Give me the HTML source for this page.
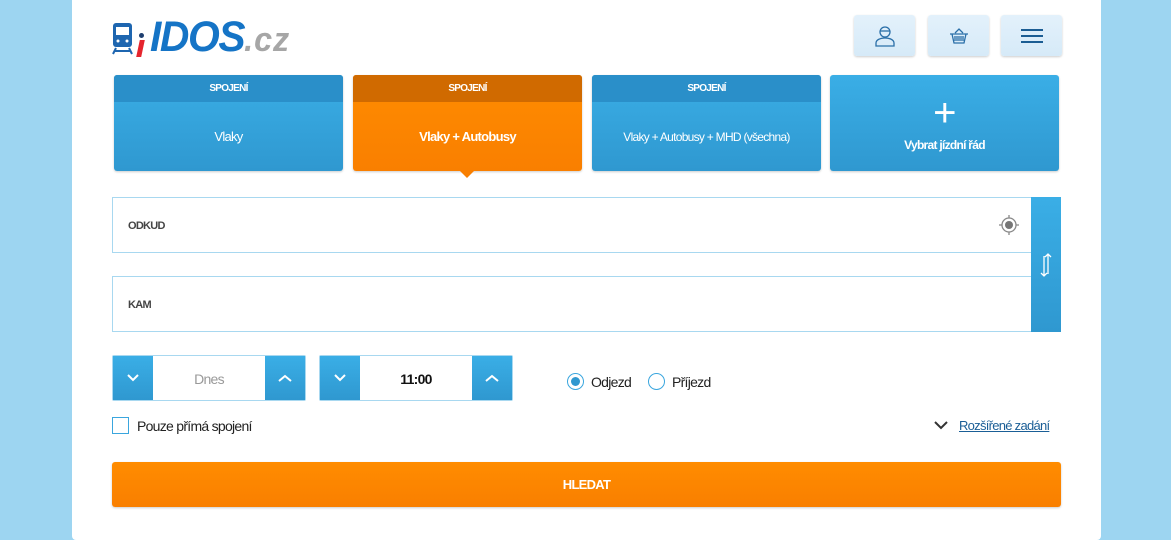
<!DOCTYPE html>
<html><head><meta charset="utf-8"><style>
*{box-sizing:border-box;margin:0;padding:0}
body{width:1171px;height:526px;overflow:hidden;background:#9dd5f1;font-family:"Liberation Sans",sans-serif;position:relative;letter-spacing:-0.045em}
.panel{position:absolute;left:72px;top:0;width:1029px;height:540px;background:#fff;border-radius:0 0 4px 4px}
.abs{position:absolute}
.hb{position:absolute;top:15px;width:61px;height:41px;background:linear-gradient(#e3f1fb,#d6eaf8);border-radius:3px;box-shadow:0 1px 2px rgba(0,0,0,.2);display:flex;align-items:center;justify-content:center}
.tab{position:absolute;top:75px;width:229px;height:96px;background:linear-gradient(#3aaee6,#2f98d0);border-radius:3px;color:#fff;text-align:center;box-shadow:0 1px 2px rgba(0,0,0,.2)}
.tab .h{height:27px;line-height:27px;font-size:10px;font-weight:bold;background:#2a8fc9;border-radius:3px 3px 0 0}
.tab .t{font-size:13px;line-height:70px}
.inp{position:absolute;left:112px;width:920px;height:56px;border:1px solid #a8d8f0;font-size:11px;font-weight:bold;color:#444;padding-left:15px;line-height:56px}
.spin{position:absolute;top:355px;width:194px;height:46px;border:1px solid #a8d8f0;border-radius:2px;background:#fff}
.spin .b{position:absolute;top:0;width:40px;height:44px;background:linear-gradient(#3aaee6,#2f98d0);display:flex;align-items:center;justify-content:center}
.spin .v{position:absolute;left:40px;right:40px;top:0;line-height:46px;text-align:center;font-size:14px}
.radio{position:absolute;top:373px;width:17px;height:17px;border:1.5px solid #3aa6de;border-radius:50%}
</style></head><body>
<div class="panel"></div>
<svg class="abs" style="left:112px;top:22px" width="26" height="34" viewBox="0 0 26 34"><rect x="1" y="1" width="19" height="24" rx="3" fill="#1e66b0"/><rect x="4" y="5" width="13" height="8" fill="#fff"/><circle cx="6" cy="19" r="1.5" fill="#fff"/><circle cx="15" cy="19" r="1.5" fill="#fff"/><path d="M4 26l-3 6M17 26l3 6M3 29h15" stroke="#1e66b0" stroke-width="2"/></svg>
<div class="abs" style="left:139px;top:33px;width:5px;height:5px;border-radius:50%;background:#1e3f70"></div>
<div class="abs" style="left:138px;top:40px;width:5px;height:17px;background:#e5252d;transform:skewX(-12deg)"></div>
<div class="abs" style="left:150px;top:13px;font:italic bold 43px 'Liberation Sans',sans-serif;color:#1574c6;letter-spacing:-1.5px;transform:scaleX(.95);transform-origin:left">IDOS<span style="color:#a6a6a6;font-size:34px;letter-spacing:1px">.cz</span></div>
<div class="hb" style="left:854px"><svg width="22" height="22" viewBox="0 0 22 22" fill="none" stroke="#2a6fa8" stroke-width="1.3"><circle cx="11" cy="7" r="5"/><path d="M6 6h10"/><path d="M2 21v-3c0-3 4-5 9-5s9 2 9 5v3z"/></svg></div>
<div class="hb" style="left:928px"><svg width="20" height="18" viewBox="0 0 20 18" fill="none" stroke="#2a6fa8" stroke-width="1.3"><path d="M6 6l4-4 4 4M1 7h18M3 7l2 9h10l2-9M8 9v5M10 9v5M12 9v5M6 9v5M14 9v5"/></svg></div>
<div class="hb" style="left:1001px"><svg width="22" height="16"><rect y="1" width="22" height="2" fill="#1b5d93"/><rect y="7" width="22" height="2" fill="#1b5d93"/><rect y="13" width="22" height="2" fill="#1b5d93"/></svg></div>
<div class="tab" style="left:114px"><div class="h">SPOJENÍ</div><div class="t">Vlaky</div></div>
<div class="tab" style="left:353px;background:linear-gradient(#ff8c00,#f97f00)"><div class="h" style="background:#d06a00">SPOJENÍ</div><div class="t" style="font-weight:bold">Vlaky + Autobusy</div></div>
<div class="abs" style="left:460px;top:171px;border-left:7px solid transparent;border-right:7px solid transparent;border-top:7px solid #f97f00"></div>
<div class="tab" style="left:592px"><div class="h">SPOJENÍ</div><div class="t" style="font-size:12px">Vlaky + Autobusy + MHD (všechna)</div></div>
<div class="tab" style="left:830px"><div style="font-size:40px;line-height:40px;margin-top:18px">+</div><div style="font-size:12px;font-weight:bold;margin-top:5px">Vybrat jízdní řád</div></div>
<div class="inp" style="top:197px">ODKUD</div>
<svg class="abs" style="left:998px;top:214px" width="22" height="22" viewBox="0 0 22 22"><circle cx="11" cy="11" r="7" fill="none" stroke="#888" stroke-width="1.3"/><circle cx="11" cy="11" r="4" fill="#777"/><path d="M11 1v3M11 18v3M1 11h3M18 11h3" stroke="#888" stroke-width="1.3"/></svg>
<div class="inp" style="top:276px">KAM</div>
<div class="abs" style="left:1031px;top:197px;width:30px;height:135px;background:linear-gradient(#3aaee6,#2f98d0)"><svg style="position:absolute;left:7px;top:55px" width="16" height="26" fill="none" stroke="#fff" stroke-width="1.3"><path d="M10 2v20M7 5l3-3 3 3M6 4v20M3 21l3 3 3-3"/></svg></div>
<div class="spin" style="left:112px"><div class="b" style="left:0"><svg width="12" height="8"><path d="M1 1l5 5 5-5" stroke="#fff" stroke-width="2" fill="none"/></svg></div><div class="v" style="color:#999">Dnes</div><div class="b" style="right:0"><svg width="14" height="8"><path d="M1 7l6-5 6 5" stroke="#fff" stroke-width="2" fill="none"/></svg></div></div>
<div class="spin" style="left:319px"><div class="b" style="left:0"><svg width="12" height="8"><path d="M1 1l5 5 5-5" stroke="#fff" stroke-width="2" fill="none"/></svg></div><div class="v" style="font-weight:bold;color:#111">11:00</div><div class="b" style="right:0"><svg width="14" height="8"><path d="M1 7l6-5 6 5" stroke="#fff" stroke-width="2" fill="none"/></svg></div></div>
<div class="radio" style="left:567px"><div style="margin:2.5px;width:9px;height:9px;border-radius:50%;background:#2f98d0"></div></div>
<div class="abs" style="left:591px;top:374px;font-size:14px;color:#222">Odjezd</div>
<div class="radio" style="left:648px"></div>
<div class="abs" style="left:672px;top:374px;font-size:14px;color:#222">Příjezd</div>
<div class="abs" style="left:112px;top:417px;width:17px;height:17px;border:1.5px solid #3aa6de"></div>
<div class="abs" style="left:137px;top:418px;font-size:14px;color:#222">Pouze přímá spojení</div>
<svg class="abs" style="left:934px;top:421px" width="14" height="9"><path d="M1 1l6 6 6-6" stroke="#333" stroke-width="2" fill="none"/></svg>
<div class="abs" style="left:959px;top:418px;font-size:13px;color:#1a5e96;text-decoration:underline">Rozšířené zadání</div>
<div class="abs" style="left:112px;top:462px;width:949px;height:45px;background:linear-gradient(#ff8c00,#f97f00);border-radius:3px;color:#fff;font-weight:bold;font-size:13px;text-align:center;line-height:45px;box-shadow:0 1px 2px rgba(0,0,0,.2)">HLEDAT</div>
</body></html>
